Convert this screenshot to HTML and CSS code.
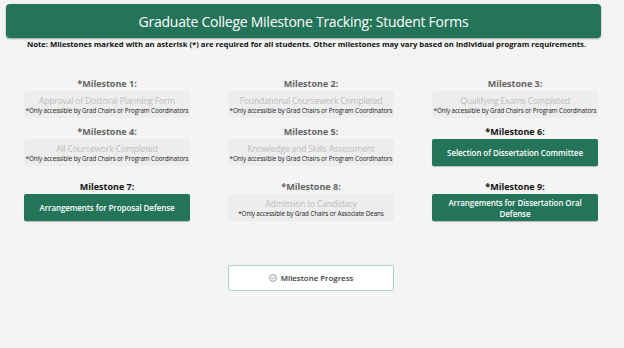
FILE: index.html
```html
<!DOCTYPE html>
<html lang="en">
<head>
<meta charset="utf-8">
<title>Graduate College Milestone Tracking</title>
<link rel="stylesheet" href="styles.css">
</head>
<body>
<div class="page">
  <header class="header"><h1 class="title">Graduate College Milestone Tracking: Student Forms</h1></header>
  <p class="note">Note: Milestones marked with an asterisk (*) are required for all students. Other milestones may vary based on individual program requirements.</p>

  <div class="grid row1">
    <div class="cell">
      <div class="label muted">*Milestone 1:</div>
      <div class="box disabled"><span class="dtitle">Approval of Doctoral Planning Form</span><span class="sub">*Only accessible by Grad Chairs or Program Coordinators</span></div>
    </div>
    <div class="cell">
      <div class="label muted">Milestone 2:</div>
      <div class="box disabled"><span class="dtitle">Foundational Coursework Completed</span><span class="sub">*Only accessible by Grad Chairs or Program Coordinators</span></div>
    </div>
    <div class="cell">
      <div class="label muted">Milestone 3:</div>
      <div class="box disabled"><span class="dtitle">Qualifying Exams Completed</span><span class="sub">*Only accessible by Grad Chairs or Program Coordinators</span></div>
    </div>
  </div>

  <div class="grid row2">
    <div class="cell">
      <div class="label muted">*Milestone 4:</div>
      <div class="box disabled"><span class="dtitle">All Coursework Completed</span><span class="sub">*Only accessible by Grad Chairs or Program Coordinators</span></div>
    </div>
    <div class="cell">
      <div class="label muted">Milestone 5:</div>
      <div class="box disabled"><span class="dtitle">Knowledge and Skills Assessment</span><span class="sub">*Only accessible by Grad Chairs or Program Coordinators</span></div>
    </div>
    <div class="cell">
      <div class="label">*Milestone 6:</div>
      <div class="box active">Selection of Dissertation Committee</div>
    </div>
  </div>

  <div class="grid row3">
    <div class="cell">
      <div class="label">Milestone 7:</div>
      <div class="box active">Arrangements for Proposal Defense</div>
    </div>
    <div class="cell">
      <div class="label muted">*Milestone 8:</div>
      <div class="box disabled"><span class="dtitle">Admission to Candidacy</span><span class="sub">*Only accessible by Grad Chairs or Associate Deans</span></div>
    </div>
    <div class="cell">
      <div class="label">*Milestone 9:</div>
      <div class="box active">Arrangements for Dissertation Oral Defense</div>
    </div>
  </div>

  <div class="progress-wrap">
    <button class="progress" type="button">
      <svg class="picon" width="8" height="8" viewBox="0 0 8 8" aria-hidden="true"><circle cx="4" cy="4" r="3.4" fill="none" stroke="#8a8a8a" stroke-width="0.9"/><path d="M2.4 4.1 L3.5 5.1 L5.6 3" fill="none" stroke="#8a8a8a" stroke-width="0.9"/></svg>
      <span>Milestone Progress</span>
    </button>
  </div>
</div>
</body>
</html>
```

FILE: styles.css
```css
* { box-sizing: border-box; }
html, body { margin: 0; padding: 0; }
body {
  background: #f4f4f4;
  font-family: "Open Sans", "Noto Sans", Arial, sans-serif;
  width: 624px;
  height: 348px;
  overflow: hidden;
}
.page { padding-top: 4px; }
.header {
  margin: 0 23px 0 6px;
  height: 34px;
  background: #24745a;
  border-radius: 4px;
  box-shadow: 0 1px 2px rgba(0,0,0,0.35);
  display: flex;
  align-items: center;
  justify-content: center;
}
.title {
  margin: 0;
  color: #fff;
  font-size: 14px;
  font-weight: 500;
  letter-spacing: -0.25px;
}
.note {
  margin: 1px 0 0 0;
  text-align: center;
  font-size: 7.7px;
  font-weight: 700;
  color: #111;
  line-height: 11px;
  padding-right: 11px;
}
.grid {
  display: grid;
  grid-template-columns: repeat(3, 166px);
  column-gap: 38px;
  margin-left: 24px;
}
.row1 { margin-top: 28px; }
.row2 { margin-top: 8px; }
.row3 { margin-top: 15px; }
.cell { display: flex; flex-direction: column; }
.label {
  height: 12px;
  line-height: 12px;
  text-align: center;
  font-size: 9px;
  font-weight: 700;
  color: #111;
  margin-bottom: 1px;
}
.label.muted { color: #646464; }
.box {
  height: 27px;
  border-radius: 2px;
  display: flex;
  flex-direction: column;
  align-items: center;
  justify-content: center;
  text-align: center;
}
.disabled { background: #ededed; padding-top: 1px; }
.dtitle {
  font-size: 8.6px;
  letter-spacing: -0.2px;
  color: #bdbdbd;
  line-height: 12px;
}
.sub {
  font-size: 6.3px;
  color: #222;
  line-height: 8px;
  letter-spacing: -0.1px;
}
.active {
  background: #24745a;
  color: #fff;
  font-size: 8px;
  font-weight: 600;
  line-height: 11px;
  letter-spacing: -0.1px;
  padding: 0 10px;
  box-shadow: 0 1px 1px rgba(0,0,0,0.25);
}
.progress-wrap {
  margin-top: 44px;
  margin-left: 228px;
}
.progress {
  width: 166px;
  height: 26px;
  background: #fff;
  border: 1px solid #a9d3c2;
  border-radius: 2px;
  display: flex;
  align-items: center;
  justify-content: center;
  gap: 4px;
  font-family: "Open Sans", "Noto Sans", Arial, sans-serif;
  font-size: 7.9px;
  font-weight: 600;
  color: #3a3a3a;
  padding: 0;
}
.picon { display: block; }
```
